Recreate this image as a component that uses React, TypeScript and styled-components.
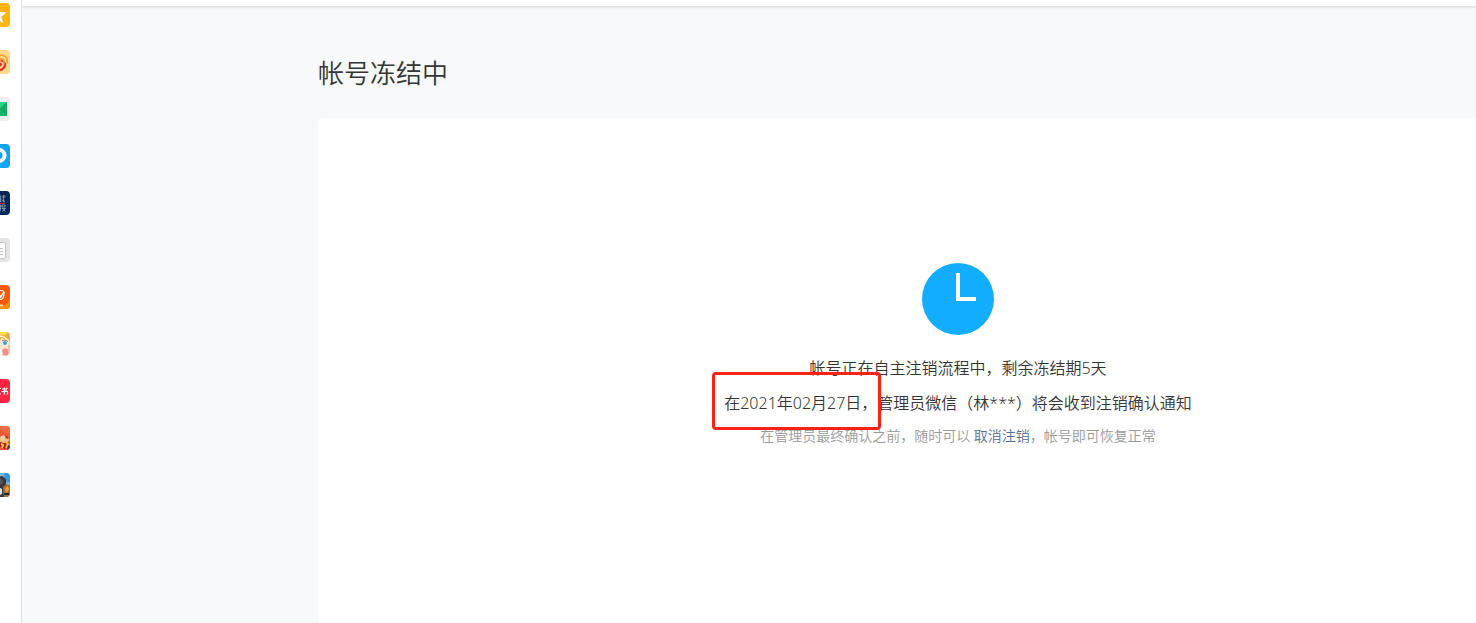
import React from "react";
import styled, { createGlobalStyle } from "styled-components";

const GlobalStyle = createGlobalStyle`
  * { box-sizing: border-box; }
  body {
    margin: 0;
    overflow: hidden;
    background: #ffffff;
    color: #353535;
    font-family: "Noto Sans", "Noto Sans CJK SC", sans-serif;
    font-weight: 350;
  }
`;

const Page = styled.div`
  display: flex;
  min-height: 100vh;
`;

const Dock = styled.nav`
  flex: none;
  display: flex;
  flex-direction: column;
  align-items: flex-end;
  gap: 23px;
  width: 22px;
  padding: 3px 11px 0 0;
  overflow: hidden;
  border-right: 1px solid #dfe2e5;
`;

const DockLink = styled.a`
  display: block;
  width: 24px;
  height: 24px;
  border-radius: 4px;
  overflow: hidden;
`;

const DockIcon = styled.svg`
  display: block;
  width: 24px;
  height: 24px;
`;

const Workspace = styled.div`
  flex: 1;
  min-width: 0;
  display: flex;
  flex-direction: column;
  overflow: hidden;
  background: #f8f9fb;
`;

const TopBar = styled.header`
  flex: none;
  height: 6px;
  background: #ffffff;
  box-shadow: 0 1px 3px rgba(0, 0, 0, 0.16);
`;

const Content = styled.main`
  flex: 1;
  display: flex;
  flex-direction: column;
  width: 1576px;
  padding: 47px 0 0 296px;
`;

const Title = styled.h1`
  margin: 0 0 25px;
  font-size: 26px;
  line-height: 40px;
  font-weight: 350;
`;

const Card = styled.section`
  flex: 1;
  display: flex;
  flex-direction: column;
  align-items: center;
  padding-top: 145px;
  border-radius: 4px 4px 0 0;
  background: #ffffff;
`;

const Clock = styled.svg`
  width: 72px;
  height: 72px;
  margin-bottom: 16px;
`;

const Message = styled.p`
  margin: 0;
  font-size: 16px;
  line-height: 35px;
  white-space: nowrap;
`;

const Marked = styled.span`
  position: relative;

  &::after {
    content: "";
    position: absolute;
    inset: -20px -4px -16px -12px;
    border: 3px solid #fb2316;
    border-radius: 4px;
    pointer-events: none;
  }
`;

const Hint = styled.p`
  margin: 0;
  font-size: 14px;
  line-height: 30px;
  color: #9a9a9a;
  white-space: nowrap;
`;

const HintLink = styled.a`
  color: #576b95;
  text-decoration: none;
`;

const dockItems: { name: string; art: React.ReactNode }[] = [
  {
    name: "收藏",
    art: (
      <>
        <rect width="24" height="24" fill="#ffb50f" />
        <path d="M11 3.500l2.500 5.500 7 .5-5.300 4.200 2 6.300-6.200-3.500-6 3.500 1.800-6.300-5.300-4.200 7-.5z" fill="#fff" />
      </>
    ),
  },
  {
    name: "微博",
    art: (
      <>
        <rect width="24" height="24" fill="#fed98c" />
        <path d="M14.500 10c4.500 1.500 5.500 4.500 3.500 7.500-1.500 2-4 3-7 3" fill="none" stroke="#e6302b" strokeWidth="2.200" />
        <circle cx="14" cy="14.500" r="2" fill="#e6302b" />
        <path d="M13.500 5.500c5-1.700 9 2.500 7.500 7.500M14 9c2.800-.8 4.700 1.200 4 3.800" fill="none" stroke="#f0a03a" strokeWidth="1.700" strokeLinecap="round" />
      </>
    ),
  },
  {
    name: "邮箱",
    art: (
      <>
        <rect width="24" height="24" fill="#eeeeee" />
        <rect x="3" y="5" width="18" height="14" fill="#18b76b" />
        <path d="M3 5h18l-9 8z" fill="#27d383" />
        <path d="M21 5v14l-7-7z" fill="#12a962" />
      </>
    ),
  },
  {
    name: "视频",
    art: (
      <>
        <rect width="24" height="24" fill="#0ea5f2" />
        <path d="M8 4h5a7.500 7.500 0 0 1 0 15H8z" fill="#fff" />
        <circle cx="13" cy="11.500" r="3.500" fill="#0ea5f2" />
      </>
    ),
  },
  {
    name: "环球时报",
    art: (
      <>
        <rect width="24" height="24" fill="#06275a" />
        <g fill="none" stroke="#aeb9cc" strokeWidth="0.700">
          <path d="M13 5h2.500M13 8h2.500M14.300 5v6M13 11l2.500-1M16 6h3.500M17.500 4v7M16 9l3 1.500M18.500 4.500l1 .7" />
          <path d="M13 15h2.500M14.300 13.500v6.500M13 18l2.500-1M16 14h3v2h-3zM16 17.500h3.500l-3.500 3M16.500 17.500l3 3" />
        </g>
        <path d="M14 12.300h5.500" stroke="#d5304a" strokeWidth="1" />
      </>
    ),
  },
  {
    name: "文档",
    art: (
      <>
        <rect width="24" height="24" fill="#e5e5e5" />
        <rect x="4" y="4.500" width="15.500" height="16" rx="1.500" fill="#fff" stroke="#c4c4c4" />
        <path d="M7 10.500h10M7 13.500h10M7 16.500h10" stroke="#c6c6c6" />
      </>
    ),
  },
  {
    name: "购物",
    art: (
      <>
        <rect width="24" height="24" fill="#fb5a0a" />
        <path d="M0 24c12 0 21-3 24-10v10z" fill="#ff8f08" />
        <path d="M10 5.500h5c3 0 3.500 1.500 3 4l-.5 2.500c-.5 2-1.500 2.500-4 2.500h-3" fill="none" stroke="#ffe5d4" strokeWidth="1.200" />
        <path d="M12.500 8.500l2 3.500 3.500-5" fill="none" stroke="#fff" strokeWidth="1.500" />
        <path d="M11 20.500h6" stroke="#ffd6a9" strokeWidth="2" />
      </>
    ),
  },
  {
    name: "美少女",
    art: (
      <>
        <rect width="24" height="24" fill="#fce3d3" />
        <path d="M0 0h24v10l-3-3-4 1-5-1-5 6H0z" fill="#e9ab55" />
        <path d="M8 0h14l-3 3-9-1z" fill="#ffe23b" />
        <path d="M14 4l4 1 5 4M15 7l6 1" fill="none" stroke="#fff0bd" strokeWidth="1.500" />
        <ellipse cx="19" cy="11" rx="3" ry="2.500" fill="#e7f7fb" />
        <circle cx="19" cy="11" r="2" fill="#3ba4bd" />
        <path d="M16 9c2-1.500 4-1 6 .5" fill="none" stroke="#a66b45" />
        <circle cx="19.500" cy="20" r="3.500" fill="#ef8f91" />
        <path d="M14 17l3 4-3 3z" fill="#fff" />
        <path d="M23 13v8" stroke="#f6bcae" strokeWidth="2" />
      </>
    ),
  },
  {
    name: "小红书",
    art: (
      <>
        <rect width="24" height="24" fill="#ff2442" />
        <g fill="none" stroke="#fff" strokeWidth="1.200">
          <path d="M10 9.500h5M12.500 9.500v5.500M10 15h5" />
          <path d="M16 10h4v2.500M15.500 12.500h6v2.500h-1M18.300 8.500v7M20.500 8.800l1 .8" />
        </g>
      </>
    ),
  },
  {
    name: "动作游戏",
    art: (
      <>
        <rect width="24" height="24" fill="#ec5938" />
        <path d="M0 0h24v8L12 4z" fill="#f26b45" />
        <path d="M14 11l4-2 1 4 4-3v5l-4 3-5-1z" fill="#edbd78" />
        <circle cx="17" cy="12" r="2.500" fill="#f3ce97" />
        <path d="M19 10l4 1-1 2-2-1z" fill="#a33d27" />
        <path d="M14 16l4 1 5-1v5l-4 2-5-2z" fill="#b51f28" />
        <path d="M15 18l2 1-1 3M20 16l2 2-2 4" fill="none" stroke="#f9c136" strokeWidth="2" />
        <path d="M22 19l2 1v4h-3z" fill="#503149" />
      </>
    ),
  },
  {
    name: "射击游戏",
    art: (
      <>
        <rect width="24" height="24" fill="#73b5e8" />
        <path d="M18 0h6v9h-5z" fill="#3f93d7" />
        <path d="M19 11l5 1v12H12V14z" fill="#ae672b" />
        <path d="M11 4l5-1 4 3v5l-3 3v5l1 5h-7z" fill="#35383d" />
        <path d="M14 5l3 2v3l-3 2z" fill="#50565c" />
        <path d="M14 15l2 1v5l-2 1z" fill="#e5e3df" />
        <path d="M19 15l3-2 1 4-3 3z" fill="#f0a433" />
        <path d="M18 20h5v2h-5z" fill="#222a31" />
      </>
    ),
  },
];

export default function App() {
  return (
    <>
      <GlobalStyle />
      <Page lang="zh-CN">
        <Dock aria-label="快捷方式">
          {dockItems.map((item) => (
            <DockLink key={item.name} href="#" aria-label={item.name}>
              <DockIcon viewBox="0 0 24 24" aria-hidden="true">
                {item.art}
              </DockIcon>
            </DockLink>
          ))}
        </Dock>
        <Workspace>
          <TopBar />
          <Content>
            <Title>帐号冻结中</Title>
            <Card>
              <Clock viewBox="0 0 72 72" aria-hidden="true">
                <circle cx="36" cy="36" r="36" fill="#12adff" />
                <path d="M36 10v26h18" fill="none" stroke="#fff" strokeWidth="4" />
              </Clock>
              <Message>{"帐号正在自主注销流程中\uFF0C剩余冻结期5天"}</Message>
              <Message>
                <Marked>{"在2021年02月27日\uFF0C"}</Marked>
                {"管理员微信\uFF08林***\uFF09将会收到注销确认通知"}
              </Message>
              <Hint>
                {"在管理员最终确认之前\uFF0C随时可以 "}
                <HintLink href="#">取消注销</HintLink>
                {"\uFF0C帐号即可恢复正常"}
              </Hint>
            </Card>
          </Content>
        </Workspace>
      </Page>
    </>
  );
}
